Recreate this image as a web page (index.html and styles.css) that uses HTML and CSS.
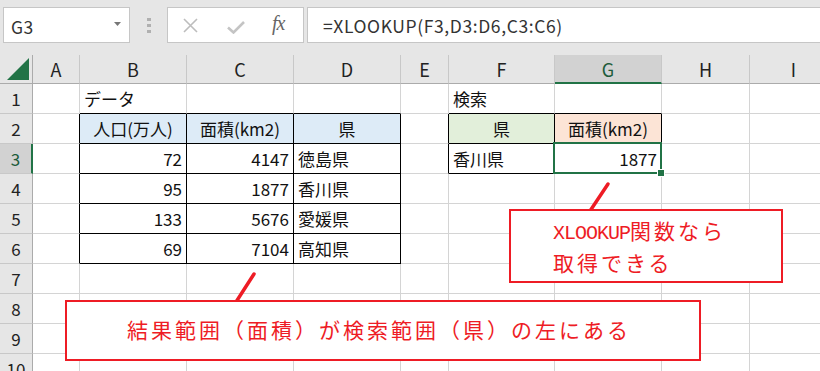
FILE: index.html
```html
<!DOCTYPE html>
<html>
<head>
	<title>XLOOKUP</title>
	<link rel="stylesheet" href="styles.css">
</head>
<body>
<div class="screen">
	<div class="bar">
		<div class="namebox">
			<span>G3</span>
			<svg class="drop" width="7" height="4" viewBox="0 0 7 4"><path d="M0 0H7L3.5 4Z" fill="#777"/></svg>
		</div>
		<div class="grip"><i></i><i></i><i></i></div>
		<div class="fxbox">
			<svg width="15" height="15" viewBox="0 0 15 15"><path d="M1 1L14 14M14 1L1 14" stroke="#bdbdbd" stroke-width="1.6" fill="none"/></svg>
			<svg width="18" height="13" viewBox="0 0 18 13"><path d="M1 6.5L6.5 11.5L17 1" stroke="#c4c4c4" stroke-width="2.6" fill="none"/></svg>
			<span class="fx">fx</span>
		</div>
		<div class="formula">=XLOOKUP(F3,D3:D6,C3:C6)</div>
	</div>

	<div class="sheet">
		<div class="ch corner"><svg width="22" height="22" viewBox="0 0 22 22"><path d="M0 22L22 0V22Z" fill="#217346"/></svg></div>
		<div class="ch">A</div><div class="ch">B</div><div class="ch">C</div><div class="ch">D</div><div class="ch">E</div><div class="ch">F</div><div class="ch on">G</div><div class="ch">H</div><div class="ch">I</div>

		<div class="rh">1</div>
		<div class="c"></div><div class="c tb">データ</div><div class="c tb"></div><div class="c tb"></div><div class="c"></div><div class="c tb">検索</div><div class="c tb"></div><div class="c"></div><div class="c"></div>

		<div class="rh">2</div>
		<div class="c tr"></div><div class="c t blue ctr">人口(万人)</div><div class="c t blue ctr">面積(km2)</div><div class="c t blue ctr">県</div><div class="c tr"></div><div class="c t green ctr">県</div><div class="c t orange ctr">面積(km2)</div><div class="c"></div><div class="c"></div>

		<div class="rh on">3</div>
		<div class="c tr"></div><div class="c t num">72</div><div class="c t num">4147</div><div class="c t">徳島県</div><div class="c tr"></div><div class="c t">香川県</div><div class="c t num sel">1877</div><div class="c"></div><div class="c"></div>

		<div class="rh">4</div>
		<div class="c tr"></div><div class="c t num">95</div><div class="c t num">1877</div><div class="c t">香川県</div><div class="c"></div><div class="c"></div><div class="c"></div><div class="c"></div><div class="c"></div>

		<div class="rh">5</div>
		<div class="c tr"></div><div class="c t num">133</div><div class="c t num">5676</div><div class="c t">愛媛県</div><div class="c"></div><div class="c"></div><div class="c"></div><div class="c"></div><div class="c"></div>

		<div class="rh">6</div>
		<div class="c tr"></div><div class="c t num">69</div><div class="c t num">7104</div><div class="c t">高知県</div><div class="c"></div><div class="c"></div><div class="c"></div><div class="c"></div><div class="c"></div>

		<div class="rh">7</div>
		<div class="c"></div><div class="c"></div><div class="c"></div><div class="c"></div><div class="c"></div><div class="c"></div><div class="c"></div><div class="c"></div><div class="c"></div>

		<div class="rh">8</div>
		<div class="c"></div><div class="c"></div><div class="c"></div><div class="c"></div><div class="c"></div><div class="c"></div><div class="c"></div><div class="c"></div><div class="c"></div>

		<div class="rh">9</div>
		<div class="c"></div><div class="c"></div><div class="c"></div><div class="c"></div><div class="c"></div><div class="c"></div><div class="c"></div><div class="c"></div><div class="c"></div>

		<div class="rh">10</div>
		<div class="c"></div><div class="c"></div><div class="c"></div><div class="c"></div><div class="c"></div><div class="c"></div><div class="c"></div><div class="c"></div><div class="c"></div>
	</div>

	<!-- callout pointers -->
	<svg class="pointers" width="820" height="371" viewBox="0 0 820 371">
		<path d="M254 274L236 302" stroke="#ee1c25" stroke-width="3.5" stroke-linecap="round"/>
		<path d="M608 184L590 211" stroke="#ee1c25" stroke-width="3.5" stroke-linecap="round"/>
	</svg>
	<div class="note note-left">結果範囲（面積）が検索範囲（県）の左にある</div>
	<div class="note note-right"><span class="mono">XLOOKUP</span>関数なら<br>取得できる</div>
</div>
</body>
</html>
```

FILE: styles.css
```css
body {
	margin: 0;
	font-family: "Noto Sans CJK JP", "Noto Sans", sans-serif;
	color: #222;
}
.screen {
	position: relative;
	width: 820px;
	height: 371px;
	overflow: hidden;
	background-color: #FFF;
}

/* formula bar */
.bar {
	display: flex;
	align-items: flex-start;
	height: 55px;
	padding: 7px 0 0 3px;
	box-sizing: border-box;
	background-color: #e6e6e6;
}
.namebox, .fxbox, .formula {
	height: 36px;
	box-sizing: border-box;
	background-color: #FFF;
	border: solid 1px #c6c6c6;
	display: flex;
	align-items: center;
}
.namebox {
	width: 127px;
	padding: 0 8px 0 7px;
	justify-content: space-between;
	font-size: 17.5px;
	letter-spacing: 0.5px;
	color: #333;
}
.namebox span {
	padding-top: 2px;
}
.drop {
	margin-top: -3px;
}
.grip {
	display: flex;
	flex-direction: column;
	gap: 3px;
	margin: 11px 16px 0 17px;
}
.grip i {
	width: 4px;
	height: 3px;
	background-color: #b0b0b0;
}
.fxbox {
	width: 137px;
	padding: 0 0 0 15px;
	gap: 0;
}
.fxbox svg:first-child {
	margin-top: 1px;
}
.fxbox svg:nth-child(2) {
	margin: 4px 0 0 29px;
}
.fx {
	margin: -3px 0 0 27px;
	font-family: "Liberation Serif", serif;
	font-style: italic;
	font-size: 20px;
	color: #666;
	letter-spacing: -1px;
}
.formula {
	flex: 1;
	margin-left: 3px;
	border-right: none;
	padding: 1px 0 0 15px;
	font-size: 17.5px;
	letter-spacing: 0.6px;
	color: #333;
}

/* grid */
.sheet {
	display: grid;
	grid-template-columns: 33px 47px 107px 107px 107px 48px 106px 107px 88px 88px;
	grid-template-rows: 29px repeat(10, 30px);
	font-size: 17px;
}
.sheet > div {
	box-sizing: border-box;
	display: flex;
	align-items: center;
	white-space: nowrap;
}
.ch {
	background-color: #e6e6e6;
	border-right: solid 1px #c8c8c8;
	border-bottom: solid 1px #ababab;
	justify-content: center;
	font-size: 18px;
	color: #222;
}
.ch.corner {
	border-right-color: #ababab;
	justify-content: flex-end;
	align-items: flex-end;
	padding: 0 3px 3px 0;
}
.ch.on {
	background-color: #d2d2d2;
	border-bottom: solid 2px #217346;
	color: #1d5c3b;
}
.rh {
	background-color: #e6e6e6;
	border-right: solid 1px #ababab;
	border-bottom: solid 1px #c8c8c8;
	justify-content: center;
	font-size: 17px;
	color: #222;
}
.rh.on {
	background-color: #d2d2d2;
	border-right: solid 2px #217346;
	color: #1d5c3b;
}
.c {
	border-right: solid 1px #d4d4d4;
	border-bottom: solid 1px #d4d4d4;
	padding: 0 4px;
	color: #111;
}
.c.t {
	border-right-color: #000;
	border-bottom-color: #000;
}
.c.tr {
	border-right-color: #000;
}
.c.tb {
	border-bottom-color: #000;
}
.num {
	justify-content: flex-end;
}
.ctr {
	justify-content: center;
}
.blue {
	background-color: #ddebf7;
}
.green {
	background-color: #e2efda;
}
.orange {
	background-color: #fce4d6;
}
.c.sel {
	position: relative;
}
.c.sel::after {
	content: "";
	position: absolute;
	left: -2px;
	top: -2px;
	right: -1px;
	bottom: -1px;
	border: solid 2px #217346;
}
.c.sel::before {
	content: "";
	position: absolute;
	right: -4px;
	bottom: -4px;
	width: 6px;
	height: 6px;
	background-color: #217346;
	border: solid 1px #FFF;
	z-index: 1;
}

/* callouts */
.pointers {
	position: absolute;
	left: 0;
	top: 0;
}
.note {
	position: absolute;
	box-sizing: border-box;
	background-color: #FFF;
	border: solid 2px #ee1c25;
	color: #ee1c25;
	font-size: 21px;
	letter-spacing: 3px;
}
.note-left {
	left: 65px;
	top: 300px;
	width: 636px;
	height: 61px;
	display: flex;
	align-items: center;
	padding: 0 0 4px 60px;
}
.note-right {
	left: 509px;
	top: 209px;
	width: 274px;
	height: 74px;
	padding: 5px 0 0 42px;
	line-height: 28px;
}
.mono {
	font-family: "Liberation Mono", monospace;
	font-size: 20px;
	letter-spacing: -1px;
}
```
